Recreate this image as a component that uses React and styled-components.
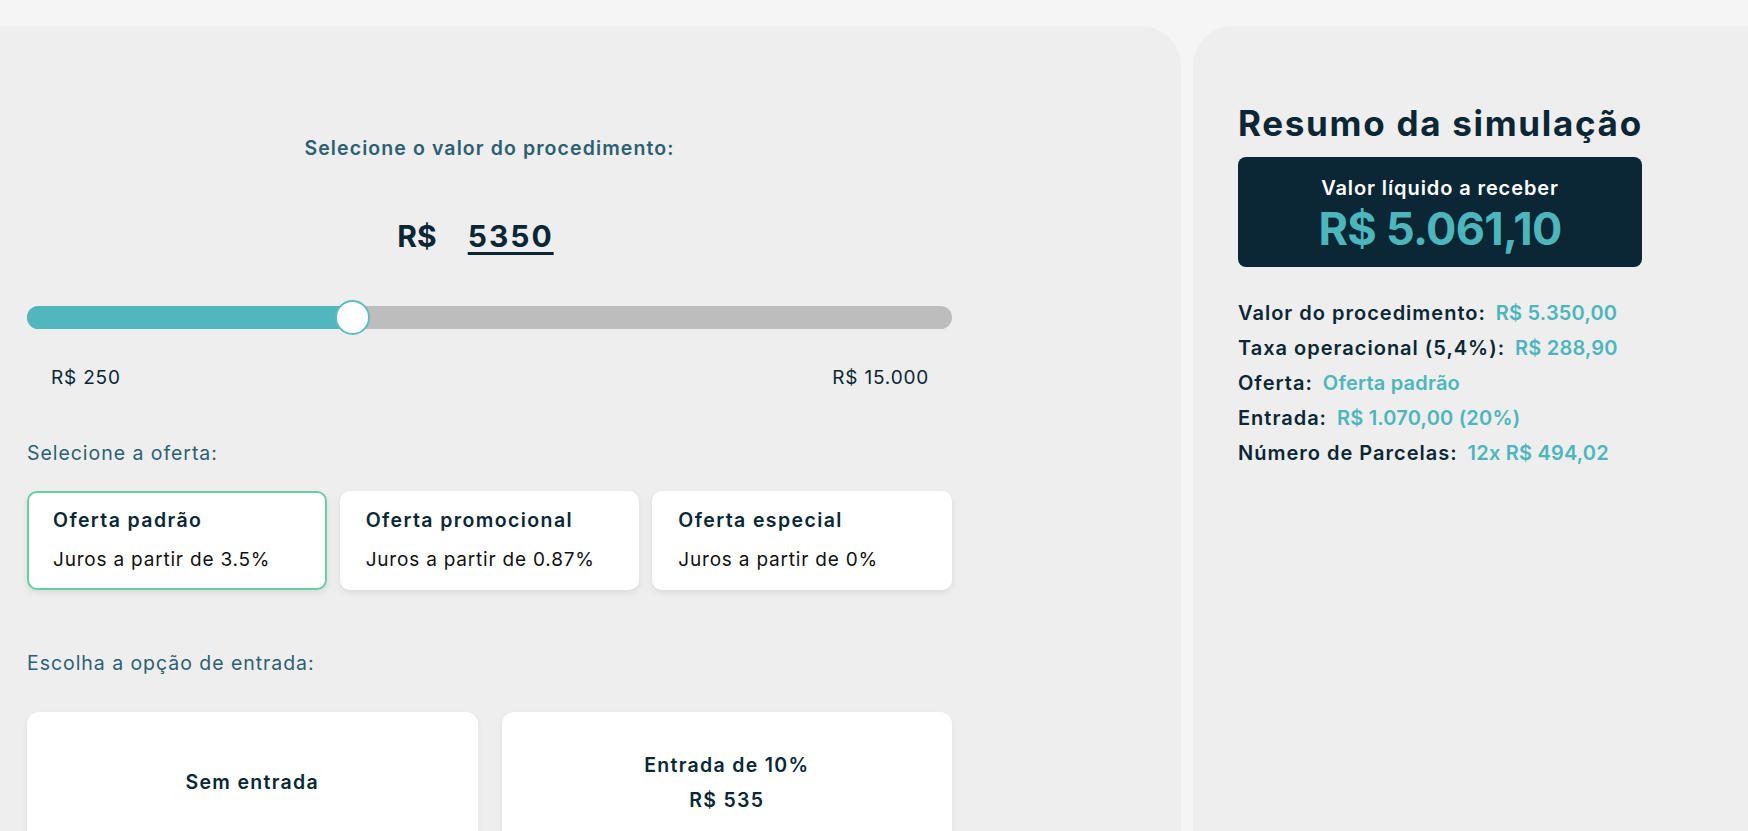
import React from 'react';
import styled, { createGlobalStyle } from 'styled-components';

const GlobalStyle = createGlobalStyle`
    html, body {
        margin: 0;
        padding: 0;
        background: #f5f5f5;
        font-family: Inter, "Noto Sans", sans-serif;
        color: #0b2735;
    }
    * { box-sizing: border-box; }
`

const Page = styled.div`
    display: flex;
    gap: 12px;
    height: 831px;
    padding-top: 26px;
    overflow: hidden;
`

const SimPanel = styled.section`
    flex: 0 0 1181px;
    background: #eeeeee;
    border-top-right-radius: 40px;
    padding: 0 0 0 27px;
`

const Column = styled.div`
    width: 925px;
    display: flex;
    flex-direction: column;
`

const CenterLabel = styled.h3`
    margin: 110px 0 0;
    text-align: center;
    font-size: 19.5px;
    font-weight: 600;
    letter-spacing: 1.1px;
    line-height: 24px;
    color: #2d5f73;
`

const AmountRow = styled.div`
    margin-top: 59px;
    padding-right: 28px;
    display: flex;
    justify-content: center;
    align-items: baseline;
    gap: 31px;
    font-size: 30px;
    font-weight: 700;
    line-height: 34px;
    color: #0b2735;
`

const AmountValue = styled.span`
    letter-spacing: 2px;
    text-decoration: underline;
    text-decoration-thickness: 3px;
    text-underline-offset: 5px;
`

const Track = styled.div`
    position: relative;
    margin-top: 53px;
    height: 23px;
    border-radius: 12px;
    background: #bdbdbd;
`

const Fill = styled.div`
    height: 100%;
    border-radius: 12px 0 0 12px;
    background: #51b6bd;
`

const Thumb = styled.div`
    position: absolute;
    top: -6px;
    width: 35px;
    height: 35px;
    border-radius: 50%;
    background: #fff;
    border: 2px solid #5bbdc3;
`

const RangeLabels = styled.div`
    display: flex;
    justify-content: space-between;
    margin-top: 37px;
    padding: 0 23px 0 24px;
    font-size: 19px;
    letter-spacing: 0.8px;
    line-height: 24px;
    color: #0b2735;
`

const SectionLabel = styled.h4`
    margin: ${p => p.$top}px 0 0;
    font-size: 19.5px;
    font-weight: 400;
    letter-spacing: 0.95px;
    line-height: 22px;
    color: #2d5f73;
`

const OfferGrid = styled.div`
    display: grid;
    grid-template-columns: repeat(3, 1fr);
    gap: 13px;
    margin-top: 27px;
`

const OfferCard = styled.div`
    height: 99px;
    padding: 16px 24px 0;
    background: #fff;
    border-radius: 10px;
    border: 2px solid ${p => p.$active ? '#66d1a0' : '#fff'};
    box-shadow: 0 3px 6px rgba(0, 0, 0, 0.08);
`

const OfferTitle = styled.div`
    font-size: 19.5px;
    font-weight: 600;
    letter-spacing: 1.4px;
    line-height: 22px;
    color: #0b2735;
`

const OfferRate = styled.div`
    margin-top: 18px;
    font-size: 19px;
    letter-spacing: 0.8px;
    line-height: 22px;
    color: #111;
`

const EntryGrid = styled.div`
    display: grid;
    grid-template-columns: 1fr 1fr;
    gap: 24px;
    margin-top: 38px;
`

const EntryCard = styled.div`
    height: 140px;
    background: #fff;
    border-radius: 12px;
    box-shadow: 0 3px 6px rgba(0, 0, 0, 0.06);
    display: flex;
    flex-direction: column;
    justify-content: center;
    align-items: center;
    gap: 13px;
    font-size: 19.5px;
    font-weight: 600;
    letter-spacing: 1.3px;
    line-height: 22px;
    color: #0b2735;
`

const SummaryPanel = styled.aside`
    flex: 1;
    background: #eeeeee;
    border-top-left-radius: 40px;
    padding: 0 45px;
`

const SummaryTitle = styled.h2`
    margin: 71px 0 0;
    font-size: 35px;
    font-weight: 700;
    letter-spacing: 1.7px;
    line-height: 52px;
    color: #0b2735;
`

const NetBox = styled.div`
    width: 404px;
    height: 110px;
    margin-top: 8px;
    background: #0b2735;
    border-radius: 8px;
    display: flex;
    flex-direction: column;
    align-items: center;
    padding-top: 19px;
`

const NetLabel = styled.div`
    font-size: 20px;
    font-weight: 600;
    letter-spacing: 0.9px;
    line-height: 24px;
    color: #fff;
`

const NetValue = styled.div`
    margin-top: 3px;
    font-size: 45px;
    font-weight: 700;
    letter-spacing: -0.7px;
    line-height: 52px;
    color: #4db6bc;
`

const SummaryList = styled.div`
    margin-top: 29px;
    display: flex;
    flex-direction: column;
`

const SummaryRow = styled.div`
    font-size: 20px;
    font-weight: 600;
    letter-spacing: 1px;
    line-height: 35px;
    color: #0b2735;
`

const SummaryValue = styled.span`
    margin-left: 10px;
    letter-spacing: 0.2px;
    color: #4db6bc;
`

const offers = [
    { title: 'Oferta padrão', rate: 'Juros a partir de 3.5%' },
    { title: 'Oferta promocional', rate: 'Juros a partir de 0.87%' },
    { title: 'Oferta especial', rate: 'Juros a partir de 0%' },
]

const summary = [
    ['Valor do procedimento:', 'R$ 5.350,00'],
    ['Taxa operacional (5,4%):', 'R$ 288,90'],
    ['Oferta:', 'Oferta padrão'],
    ['Entrada:', 'R$ 1.070,00 (20%)'],
    ['Número de Parcelas:', '12x R$ 494,02'],
]

const MIN = 250
const MAX = 15000
const TRACK = 925
const THUMB = 35

const App = () => {
    const value = 5350
    const ratio = (value - MIN) / (MAX - MIN)
    const thumbLeft = ratio * (TRACK - THUMB)

    return (
        <>
            <GlobalStyle />
            <Page>
                <SimPanel>
                    <Column>
                        <CenterLabel>Selecione o valor do procedimento:</CenterLabel>
                        <AmountRow>
                            <span>R$</span>
                            <AmountValue>{value}</AmountValue>
                        </AmountRow>
                        <Track>
                            <Fill style={{ width: thumbLeft + THUMB / 2 }} />
                            <Thumb style={{ left: thumbLeft }} />
                        </Track>
                        <RangeLabels>
                            <span>R$ 250</span>
                            <span>R$ 15.000</span>
                        </RangeLabels>

                        <SectionLabel $top={52}>Selecione a oferta:</SectionLabel>
                        <OfferGrid>
                            {offers.map((o, i) => (
                                <OfferCard key={o.title} $active={i === 0}>
                                    <OfferTitle>{o.title}</OfferTitle>
                                    <OfferRate>{o.rate}</OfferRate>
                                </OfferCard>
                            ))}
                        </OfferGrid>

                        <SectionLabel $top={62}>Escolha a opção de entrada:</SectionLabel>
                        <EntryGrid>
                            <EntryCard>Sem entrada</EntryCard>
                            <EntryCard>
                                <div>Entrada de 10%</div>
                                <div>R$ 535</div>
                            </EntryCard>
                        </EntryGrid>
                    </Column>
                </SimPanel>

                <SummaryPanel>
                    <SummaryTitle>Resumo da simulação</SummaryTitle>
                    <NetBox>
                        <NetLabel>Valor líquido a receber</NetLabel>
                        <NetValue>R$ 5.061,10</NetValue>
                    </NetBox>
                    <SummaryList>
                        {summary.map(([k, v]) => (
                            <SummaryRow key={k}>{k}<SummaryValue>{v}</SummaryValue></SummaryRow>
                        ))}
                    </SummaryList>
                </SummaryPanel>
            </Page>
        </>
    )
}

export default App;
